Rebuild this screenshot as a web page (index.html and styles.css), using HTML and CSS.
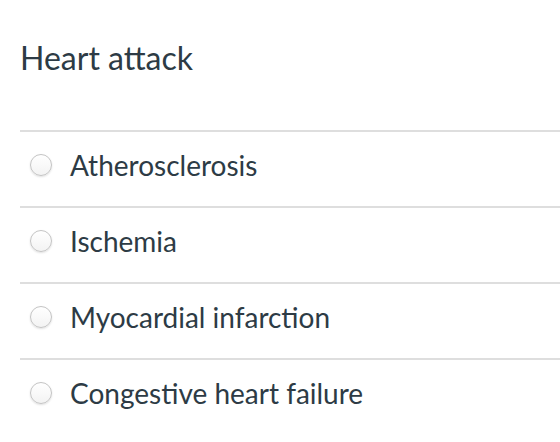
FILE: index.html
```html
<!DOCTYPE html>
<html>
<head>
<meta charset="utf-8">
<link rel="stylesheet" href="styles.css">
</head>
<body>
<div class="question">
  <h1 class="question-title">Heart attack</h1>
  <ul class="answers">
    <li class="answer"><span class="radio"></span><span class="label">Atherosclerosis</span></li>
    <li class="answer"><span class="radio"></span><span class="label">Ischemia</span></li>
    <li class="answer"><span class="radio"></span><span class="label">Myocardial infarction</span></li>
    <li class="answer"><span class="radio"></span><span class="label">Congestive heart failure</span></li>
  </ul>
</div>
</body>
</html>
```
FILE: styles.css
```css
html, body {
  margin: 0;
  padding: 0;
  background: #ffffff;
}
body {
  font-family: Lato, "Open Sans", sans-serif;
  color: #2d3b45;
}
.question {
  padding-left: 20px;
}
.question-title {
  margin: 0;
  height: 130px;
  padding-top: 40px;
  box-sizing: border-box;
  font-size: 32px;
  font-weight: 400;
  line-height: 36px;
}
.answers {
  list-style: none;
  margin: 0;
  padding: 0;
}
.answer {
  display: flex;
  align-items: center;
  height: 76px;
  box-sizing: border-box;
  border-top: 2px solid #dedede;
  padding-left: 10px;
  padding-bottom: 9px;
}
.radio {
  width: 20px;
  height: 20px;
  border-radius: 50%;
  border: 1px solid #c4c4c4;
  background: linear-gradient(#ffffff, #f3f3f3);
  box-shadow: 0 1px 2px rgba(0,0,0,0.12);
  flex: none;
}
.label {
  margin-left: 18px;
  font-size: 28px;
  line-height: 32px;
}
```
